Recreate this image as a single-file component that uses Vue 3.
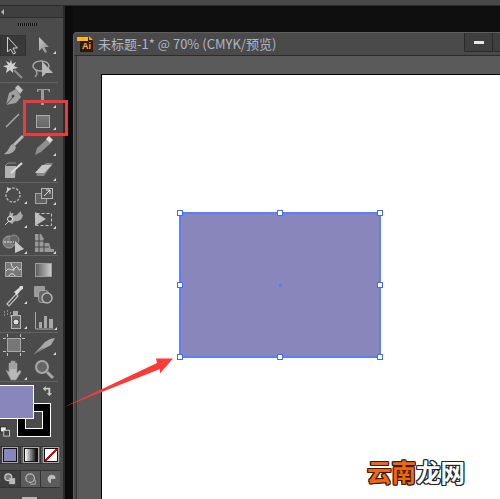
<script setup>
const handles = [
  [0, 0], [50, 0], [100, 0],
  [0, 50], [100, 50],
  [0, 100], [50, 100], [100, 100]
]
</script>

<template>
  <div class="page">
    <div class="topbar"></div>
    <div class="main">
      <aside class="tools">
        <div class="head"><span class="collapse"></span></div>
        <div class="grip"></div>

        <div class="group g1">
          <div class="cell on">
            <svg viewBox="0 0 29 24"><path d="M8.5 4v15l3-3 3 5 2-1-2.5-5h4.5z" fill="#3a3a3a" stroke="#cfcfcf"/></svg>
          </div>
          <div class="cell">
            <svg viewBox="0 0 29 24"><defs><linearGradient id="da" x1="0" y1="0" x2="1" y2="1"><stop offset="0" stop-color="#c8c8c8"/><stop offset="1" stop-color="#858585"/></linearGradient></defs><path d="M10 4v14l3-3 3 5 2-1-2.500-5h4.500z" fill="url(#da)"/><path class="t" d="M27 21h-3l3-3z"/></svg>
          </div>
          <div class="cell">
            <svg viewBox="0 0 29 24"><path d="M11 2l1 5 4-2-2 4 4 2-5 1 0 4-3-3-4 3 1-5-4-2 5-1-2-4 4 2z" fill="#d0d0d0"/><path d="M14 13l8 8" stroke="#8f8f8f" stroke-width="2"/></svg>
          </div>
          <div class="cell">
            <svg viewBox="0 0 29 24"><ellipse cx="12" cy="9" rx="8" ry="5" fill="none" stroke="#a8a8a8" stroke-width="1.500"/><path d="M7 13l1 4-2 3" fill="none" stroke="#a8a8a8" stroke-width="1.300"/><path d="M13 4v16l4-4h7z" fill="#b8b8b8"/></svg>
          </div>
        </div>
        <div class="rule"></div>

        <div class="group g2">
          <div class="cell">
            <svg viewBox="0 0 29 24"><path d="M6 21l3-12 7-4 5 8-5 6z" fill="#a0a0a0"/><path d="M15 4l3-3 5 5-3 4z" fill="#c2c2c2"/><path d="M6 21l7-8" stroke="#4a4a4a"/><circle cx="13" cy="12" r="1.500" fill="#4a4a4a"/></svg>
          </div>
          <div class="cell">
            <svg viewBox="0 0 29 24"><path d="M8 5h13v3h-1l-1-2h-4v15h-3V6H10L9 8H8z" fill="#9a9a9a"/><path class="t" d="M27 24h-3l3-3z"/></svg>
          </div>
          <div class="cell">
            <svg viewBox="0 0 29 24"><path d="M6 18L19 5" stroke="#b0b0b0" stroke-width="1.200"/></svg>
          </div>
          <div class="cell">
            <svg viewBox="0 0 29 24"><defs><linearGradient id="rc" x1="0" y1="0" x2="0" y2="1"><stop offset="0" stop-color="#7a7a7a"/><stop offset="1" stop-color="#666"/></linearGradient></defs><rect x="7.500" y="6.500" width="13" height="12" fill="url(#rc)" stroke="#ababab"/><path class="t" d="M27 21h-3l3-3z"/></svg>
          </div>
          <div class="cell">
            <svg viewBox="0 0 29 24"><path d="M22 2l-9 9 2 2 9-9z" fill="#b8b8b8"/><path d="M13 11c-4 1-3 6-9 10 6 1 11-2 12-7z" fill="#a8a8a8"/></svg>
          </div>
          <div class="cell">
            <svg viewBox="0 0 29 24"><path d="M18 6l4 4-10 9-6 3 2-7z" fill="#8f8f8f"/><path d="M17 6l3-3 4 4-3 3z" fill="#dcdcdc"/><path class="t" d="M27 23h-3l3-3z"/></svg>
          </div>
          <div class="cell">
            <svg viewBox="0 0 29 24"><path d="M5 8h11l-1 12H5z" fill="#b2b2b2"/><path d="M11 15L22 5" stroke="#dedede" stroke-width="2"/><path d="M5 8l3-3h8" fill="none" stroke="#8a8a8a"/></svg>
          </div>
          <div class="cell">
            <svg viewBox="0 0 29 24"><path d="M7 14l10-9h7l-9 13H8z" fill="#878787"/><path d="M13 7h10l-8 8H6z" fill="#c6c6c6"/><path class="t" d="M27 23h-3l3-3z"/></svg>
          </div>
        </div>
        <div class="rule"></div>

        <div class="group g3">
          <div class="cell">
            <svg viewBox="0 0 29 24"><circle cx="13" cy="12" r="7" fill="none" stroke="#b0b0b0" stroke-width="1.500" stroke-dasharray="2.500 1.500"/><path d="M7 4l4 2-4 3z" fill="#cfcfcf"/><path class="t" d="M27 21h-3l3-3z"/></svg>
          </div>
          <div class="cell">
            <svg viewBox="0 0 29 24"><rect x="6.500" y="10.500" width="11" height="10" fill="#636363" stroke="#a5a5a5"/><rect x="12.500" y="5.500" width="11" height="10" fill="#555" stroke="#b5b5b5"/><path d="M15 13l6-6M17 7h4v4" stroke="#ddd" fill="none"/><path class="t" d="M27 22h-3l3-3z"/></svg>
          </div>
          <div class="cell">
            <svg viewBox="0 0 29 24"><path d="M10 4l3 5 4-1c1-2 3-3 4-4 0 3 1 4 2 4-1 5-4 7-8 6l-3 3-4-3z" fill="#a8a8a8"/><circle cx="10" cy="12" r="2.500" fill="#444" stroke="#eee"/><path d="M5 18l4-4M13 6l-2 4" stroke="#ccc"/><path class="t" d="M27 21h-3l3-3z"/></svg>
          </div>
          <div class="cell">
            <svg viewBox="0 0 29 24"><path d="M6 5l11 7-11 7z" fill="#bdbdbd"/><rect x="7.500" y="6.500" width="15" height="12" fill="none" stroke="#c4c4c4" stroke-dasharray="3 2"/><path class="t" d="M27 22h-3l3-3z"/></svg>
          </div>
          <div class="cell">
            <svg viewBox="0 0 29 24"><circle cx="9" cy="11" r="6" fill="#777" stroke="#a5a5a5"/><circle cx="14" cy="9" r="5" fill="#666" stroke="#909090"/><path d="M4 11h10" stroke="#eee" stroke-dasharray="2 1"/><path d="M15 10l9 8-9 4z" fill="#c8c8c8"/><path class="t" d="M27 23h-3l3-3z"/></svg>
          </div>
          <div class="cell">
            <svg viewBox="0 0 29 24"><path d="M6 3h6l3 5v4h5l2 6h3v3H6z" fill="#999"/><path d="M10 3v18M15 8v13M6 10h9M6 16h14" stroke="#444"/><path class="t" d="M27 23h-3l3-3z"/></svg>
          </div>
        </div>
        <div class="rule"></div>

        <div class="group g4">
          <div class="cell">
            <svg viewBox="0 0 29 24"><rect x="5.500" y="4.500" width="16" height="14" fill="#777" stroke="#a8a8a8"/><path d="M6 13c4-5 5 2 9-3s2 5 6 1M11 5c0 4 3 4 3 8M9 18c1-3 5-3 6 0" fill="none" stroke="#e4e4e4"/></svg>
          </div>
          <div class="cell">
            <svg viewBox="0 0 29 24"><defs><linearGradient id="gr" x1="0" y1="0" x2="1" y2="0"><stop offset="0" stop-color="#5a5a5a"/><stop offset="1" stop-color="#cfcfcf"/></linearGradient></defs><rect x="6.500" y="5.500" width="16" height="13" fill="url(#gr)" stroke="#a0a0a0"/></svg>
          </div>
          <div class="cell">
            <svg viewBox="0 0 29 24"><path d="M7 21l9-10 2 2-9 10z" fill="#4a4a4a" stroke="#c0c0c0" stroke-width="1.200"/><path d="M14 9l5-4 1-2 3 0 0 3-2 1-4 5z" fill="#dcdcdc"/><path class="t" d="M27 21h-3l3-3z"/></svg>
          </div>
          <div class="cell">
            <svg viewBox="0 0 29 24"><rect x="5" y="3" width="11" height="11" rx="1" fill="#9a9a9a"/><rect x="9.500" y="7.500" width="10" height="12" rx="3" fill="#666" stroke="#a8a8a8"/><circle cx="18" cy="15" r="5" fill="#555" stroke="#b5b5b5" stroke-width="1.500"/></svg>
          </div>
          <div class="cell">
            <svg viewBox="0 0 29 24"><path d="M4 4h1M7 3h1M4 7h1M7 6h1M10 5h1M10 8h1" stroke="#ccc"/><path d="M13 3h5v4h-5z" fill="#aaa"/><rect x="11.500" y="7.500" width="9" height="13" fill="#666" stroke="#b5b5b5"/><circle cx="16" cy="14" r="3" fill="#ddd" stroke="#444"/><path class="t" d="M27 21h-3l3-3z"/></svg>
          </div>
          <div class="cell">
            <svg viewBox="0 0 29 24"><path d="M6.500 4v17h18" fill="none" stroke="#a8a8a8"/><path d="M10 14h3v6h-3zM15 8h3v12h-3zM20 11h4v9h-4z" fill="#a8a8a8"/><path class="t" d="M28 22h-3l3-3z"/></svg>
          </div>
        </div>
        <div class="rule"></div>

        <div class="group g5">
          <div class="cell">
            <svg viewBox="0 0 29 24"><rect x="7.500" y="5.500" width="13" height="13" fill="#777" stroke="#a8a8a8"/><path d="M3 5.500h3M22 5.500h3M3 18.500h3M22 18.500h3M7.500 1v3M20.500 1v3M7.500 20v3M20.500 20v3" stroke="#c4c4c4"/></svg>
          </div>
          <div class="cell">
            <svg viewBox="0 0 29 24"><path d="M5 21L16 9l5-3 5-1-4 7z" fill="#a8a8a8"/><path d="M5 21l9-6" stroke="#777"/><path class="t" d="M27 22h-3l3-3z"/></svg>
          </div>
          <div class="cell">
            <svg viewBox="0 0 29 24"><path d="M6 13l3 2V6h2v6-8h2v8-8h2v8-6h2v10l3-3 1 2-5 8H11z" fill="#b8b8b8" stroke="#8a8a8a" stroke-width=".6"/><path class="t" d="M27 23h-3l3-3z"/></svg>
          </div>
          <div class="cell">
            <svg viewBox="0 0 29 24"><circle cx="13" cy="10" r="6" fill="#666" stroke="#a8a8a8" stroke-width="2"/><path d="M18 15l6 6" stroke="#a8a8a8" stroke-width="3"/></svg>
          </div>
        </div>
        <div class="rule"></div>

        <div class="colors">
          <div class="swatch-stack">
            <div class="stroke-box"><span></span></div>
            <div class="fill-box"></div>
            <svg class="swap" viewBox="0 0 12 12"><path d="M1 4l3-3v2h5v6h2l-3 3-3-3h2V5H4v2z" fill="#ccc"/></svg>
            <svg class="defaults" viewBox="0 0 12 12"><rect x=".5" y=".5" width="7" height="6" fill="#eee" stroke="#222"/><rect x="4.500" y="4.500" width="7" height="7" fill="#444" stroke="#ddd"/></svg>
          </div>
        </div>

        <div class="btn-row first">
          <div class="btn dark"><i class="mini solid"></i></div>
          <div class="btn"><i class="mini grad"></i></div>
          <div class="btn"><i class="mini none"></i></div>
        </div>
        <div class="btn-row second">
          <div class="btn dark"><svg viewBox="0 0 14 14"><circle cx="5" cy="5" r="4" fill="#777" stroke="#ccc" stroke-width="1.400"/><rect x="6" y="6" width="7" height="7" fill="#bbb"/></svg></div>
          <div class="btn"><svg viewBox="0 0 14 14"><circle cx="6" cy="6" r="5" fill="#666" stroke="#bbb" stroke-width="1.400"/><path d="M12 8v5H6" fill="none" stroke="#bbb"/></svg></div>
          <div class="btn"><svg viewBox="0 0 14 14"><path d="M12 4a5 5 0 1 0-5 8V7h5z" fill="#bbb"/></svg></div>
        </div>
        <div class="foot-btn"></div>
      </aside>

      <div class="gutter"></div>

      <section class="doc">
        <header class="titlebar">
          <svg class="ai" viewBox="0 0 17 16">
            <path d="M3 2h10l3 3v11H3z" fill="#2e1a06"/>
            <path d="M12 0l4 4h-4z" fill="#f2a41f"/>
            <rect x="0" y="1" width="11" height="4" fill="#fdb714"/>
            <text x="5" y="13" class="ai-text">Ai</text>
          </svg>
          <span class="title">未标题-1* @ 70% (CMYK/预览)</span>
          <span class="spacer"></span>
          <div class="winbtn"><i></i></div>
          <div class="winbtn next"></div>
        </header>
        <div class="workspace">
          <div class="canvas">
            <div class="shape">
              <i class="center"></i>
              <i
                v-for="h in handles"
                :key="h.join()"
                class="handle"
                :style="{ left: h[0] + '%', top: h[1] + '%' }"
              ></i>
            </div>
            <div class="mark"><b>云南</b><em>龙网</em></div>
          </div>
        </div>
      </section>
    </div>

    <div class="redbox"></div>
    <svg class="arrow" viewBox="0 0 500 499"><path d="M64 407L157 363L156 358.500L173 358.500L160 373.500L160 369Z" fill="#fb3a3a"/></svg>
  </div>
</template>

<style scoped>
.page {
  position: relative;
  width: 500px;
  height: 499px;
  overflow: hidden;
  background: #0f0f0f;
  display: flex;
  flex-direction: column;
  font-family: "Noto Sans CJK SC", "Liberation Sans", sans-serif;
}
.topbar {
  height: 5px;
  flex: none;
  background: #484848;
  border-bottom: 1px solid #2a2a2a;
}
.main {
  flex: 1;
  min-height: 0;
  display: flex;
}
.tools {
  width: 63px;
  flex: none;
  background: #4b4b4b;
  border-right: 1px solid #2b2b2b;
  display: flex;
  flex-direction: column;
  overflow: hidden;
}
.head {
  height: 11px;
  flex: none;
  background: #3f3f3f;
  border-bottom: 1px solid #2e2e2e;
  display: flex;
  align-items: center;
  padding-left: 1px;
}
.collapse {
  width: 0;
  height: 0;
  border-style: solid;
  border-width: 3px 3px 3px 0;
  border-color: transparent #b5b5b5 transparent transparent;
}
.grip {
  flex: none;
  width: 19px;
  height: 3px;
  margin: 5px 0 7px 18px;
  background: repeating-linear-gradient(90deg, #111 0 1px, #5a5a5a 1px 2px);
}
.group {
  display: grid;
  grid-template-columns: 29px 29px;
  flex: none;
}
.g1 { grid-auto-rows: 24px; margin-bottom: 1px; }
.g2 { grid-auto-rows: 24.5px; margin-top: 1px; }
.g3 { grid-auto-rows: 24px; }
.g4 { grid-auto-rows: 25px; margin-top: 1px; }
.g5 { grid-auto-rows: 24px; }
.cell {
  position: relative;
  display: flex;
  align-items: center;
  justify-content: center;
}
.cell svg {
  width: 29px;
  height: 24px;
  flex: none;
  overflow: visible;
}
.cell.on {
  width: 26px;
  height: 21px;
  align-self: center;
  background: #393939;
  border: 1px solid #333;
  box-sizing: border-box;
}
.t { fill: #d8d8d8; }
.rule {
  height: 1px;
  flex: none;
  margin-right: 5px;
  background: #636363;
}
.colors {
  height: 62px;
  flex: none;
  position: relative;
}
.swatch-stack {
  position: relative;
  height: 100%;
}
.fill-box {
  position: absolute;
  left: -2px;
  top: 3px;
  width: 34px;
  height: 32px;
  background: #8886ba;
  border: 1px solid #fff;
  box-sizing: content-box;
}
.stroke-box {
  position: absolute;
  left: 17px;
  top: 21px;
  width: 34px;
  height: 34px;
  box-sizing: border-box;
  background: #000;
  border: 1px solid #fff;
  display: flex;
  align-items: center;
  justify-content: center;
}
.stroke-box span {
  width: 18px;
  height: 18px;
  box-sizing: border-box;
  border: 1px solid #fff;
  background: #4b4b4b;
}
.swap {
  position: absolute;
  left: 42px;
  top: 3px;
  width: 11px;
  height: 11px;
}
.defaults {
  position: absolute;
  left: 0;
  top: 44px;
  width: 10px;
  height: 11px;
}
.btn-row {
  flex: none;
  display: grid;
  grid-template-columns: 20px 20px 20px;
  height: 18px;
  box-sizing: border-box;
  border: 1px solid #333;
  border-left: 0;
  width: 60px;
  background: #555;
}
.btn-row.first { margin-top: 2px; }
.btn-row.second { margin-top: 6px; }
.btn {
  display: flex;
  align-items: center;
  justify-content: center;
  border-left: 1px solid #333;
  background: #5c5c5c;
}
.btn:first-child { border-left: 0; }
.btn.dark { background: #3f3f3f; }
.btn svg { width: 12px; height: 12px; }
.mini {
  display: block;
  width: 12px;
  height: 12px;
  border: 1px solid #111;
  outline: 1px solid #aaa;
  outline-offset: 0;
}
.solid { background: #8886ba; }
.grad { background: linear-gradient(90deg, #fff, #000); }
.none { background: linear-gradient(135deg, #fff 42%, #e00010 42% 58%, #fff 58%); }
.foot-btn {
  flex: none;
  width: 15px;
  height: 8px;
  margin: 9px 0 0 22px;
  background: #b4b4b4;
}
.gutter {
  width: 9px;
  flex: none;
  background: linear-gradient(90deg, #2a2a2a 0 1px, #0c0c0c 1px);
}
.doc {
  flex: 1;
  min-width: 0;
  margin-top: 26px;
  display: flex;
  flex-direction: column;
  background: #4a4a4a;
  border-left: 1px solid #5e5e5e;
  border-top: 1px solid #5e5e5e;
  border-top-left-radius: 4px;
}
.titlebar {
  height: 22px;
  flex: none;
  display: flex;
  align-items: center;
  padding-left: 3px;
  border-bottom: 1px solid #2c2c2c;
}
.ai {
  width: 17px;
  height: 16px;
  flex: none;
}
.ai-text {
  font: bold 9px "Liberation Sans", sans-serif;
  fill: #f7b26a;
}
.title {
  margin-left: 4px;
  font-size: 13px;
  line-height: 22px;
  color: #aeb8c4;
  white-space: nowrap;
}
.spacer { flex: 1; }
.winbtn {
  width: 27px;
  height: 18px;
  align-self: flex-start;
  background: #3f3f3f;
  border: 1px solid #2a2a2a;
  border-top: 0;
  border-radius: 0 0 0 2px;
  display: flex;
  align-items: center;
  justify-content: center;
  flex: none;
}
.winbtn i {
  width: 10px;
  height: 3px;
  background: #e6e6e6;
}
.winbtn.next { width: 7px; border-right: 0; border-left: 0; }
.workspace {
  flex: 1;
  min-height: 0;
  background: #5a5a5a;
  padding: 18px 0 0 24px;
  display: flex;
  border-left: 1px solid #333;
  margin-left: 2px;
}
.canvas {
  position: relative;
  flex: 1;
  background: #fff;
  border-top: 1px solid #000;
  border-left: 1px solid #000;
}
.shape {
  position: absolute;
  left: 78px;
  top: 138px;
  width: 200px;
  height: 144px;
  background: #8886ba;
  outline: 2px solid #5a7fff;
  outline-offset: -1px;
}
.handle {
  position: absolute;
  width: 6px;
  height: 6px;
  margin: -3px 0 0 -3px;
  box-sizing: border-box;
  background: #fff;
  border: 1px solid #3c6dff;
}
.center {
  position: absolute;
  left: 50%;
  top: 50%;
  width: 3px;
  height: 3px;
  margin: -1px;
  background: #5d7fe8;
}
.mark {
  position: absolute;
  left: 265px;
  top: 383px;
  font-size: 24.5px;
  line-height: 28px;
  font-weight: 700;
  white-space: nowrap;
  text-shadow: 1px 0 0 #222, -1px 0 0 #222, 0 1px 0 #222, 0 -1px 0 #222, 1px 1px 0 #222, -1px -1px 0 #222, 1px -1px 0 #222, -1px 1px 0 #222;
}
.mark b { color: #f7640a; font-weight: 700; }
.mark em { color: #fff; font-style: normal; }
.redbox {
  position: absolute;
  left: 23px;
  top: 100px;
  width: 45px;
  height: 36px;
  box-sizing: border-box;
  border: 3px solid #f0393a;
}
.arrow {
  position: absolute;
  left: 0;
  top: 0;
  width: 500px;
  height: 499px;
  pointer-events: none;
}
</style>
